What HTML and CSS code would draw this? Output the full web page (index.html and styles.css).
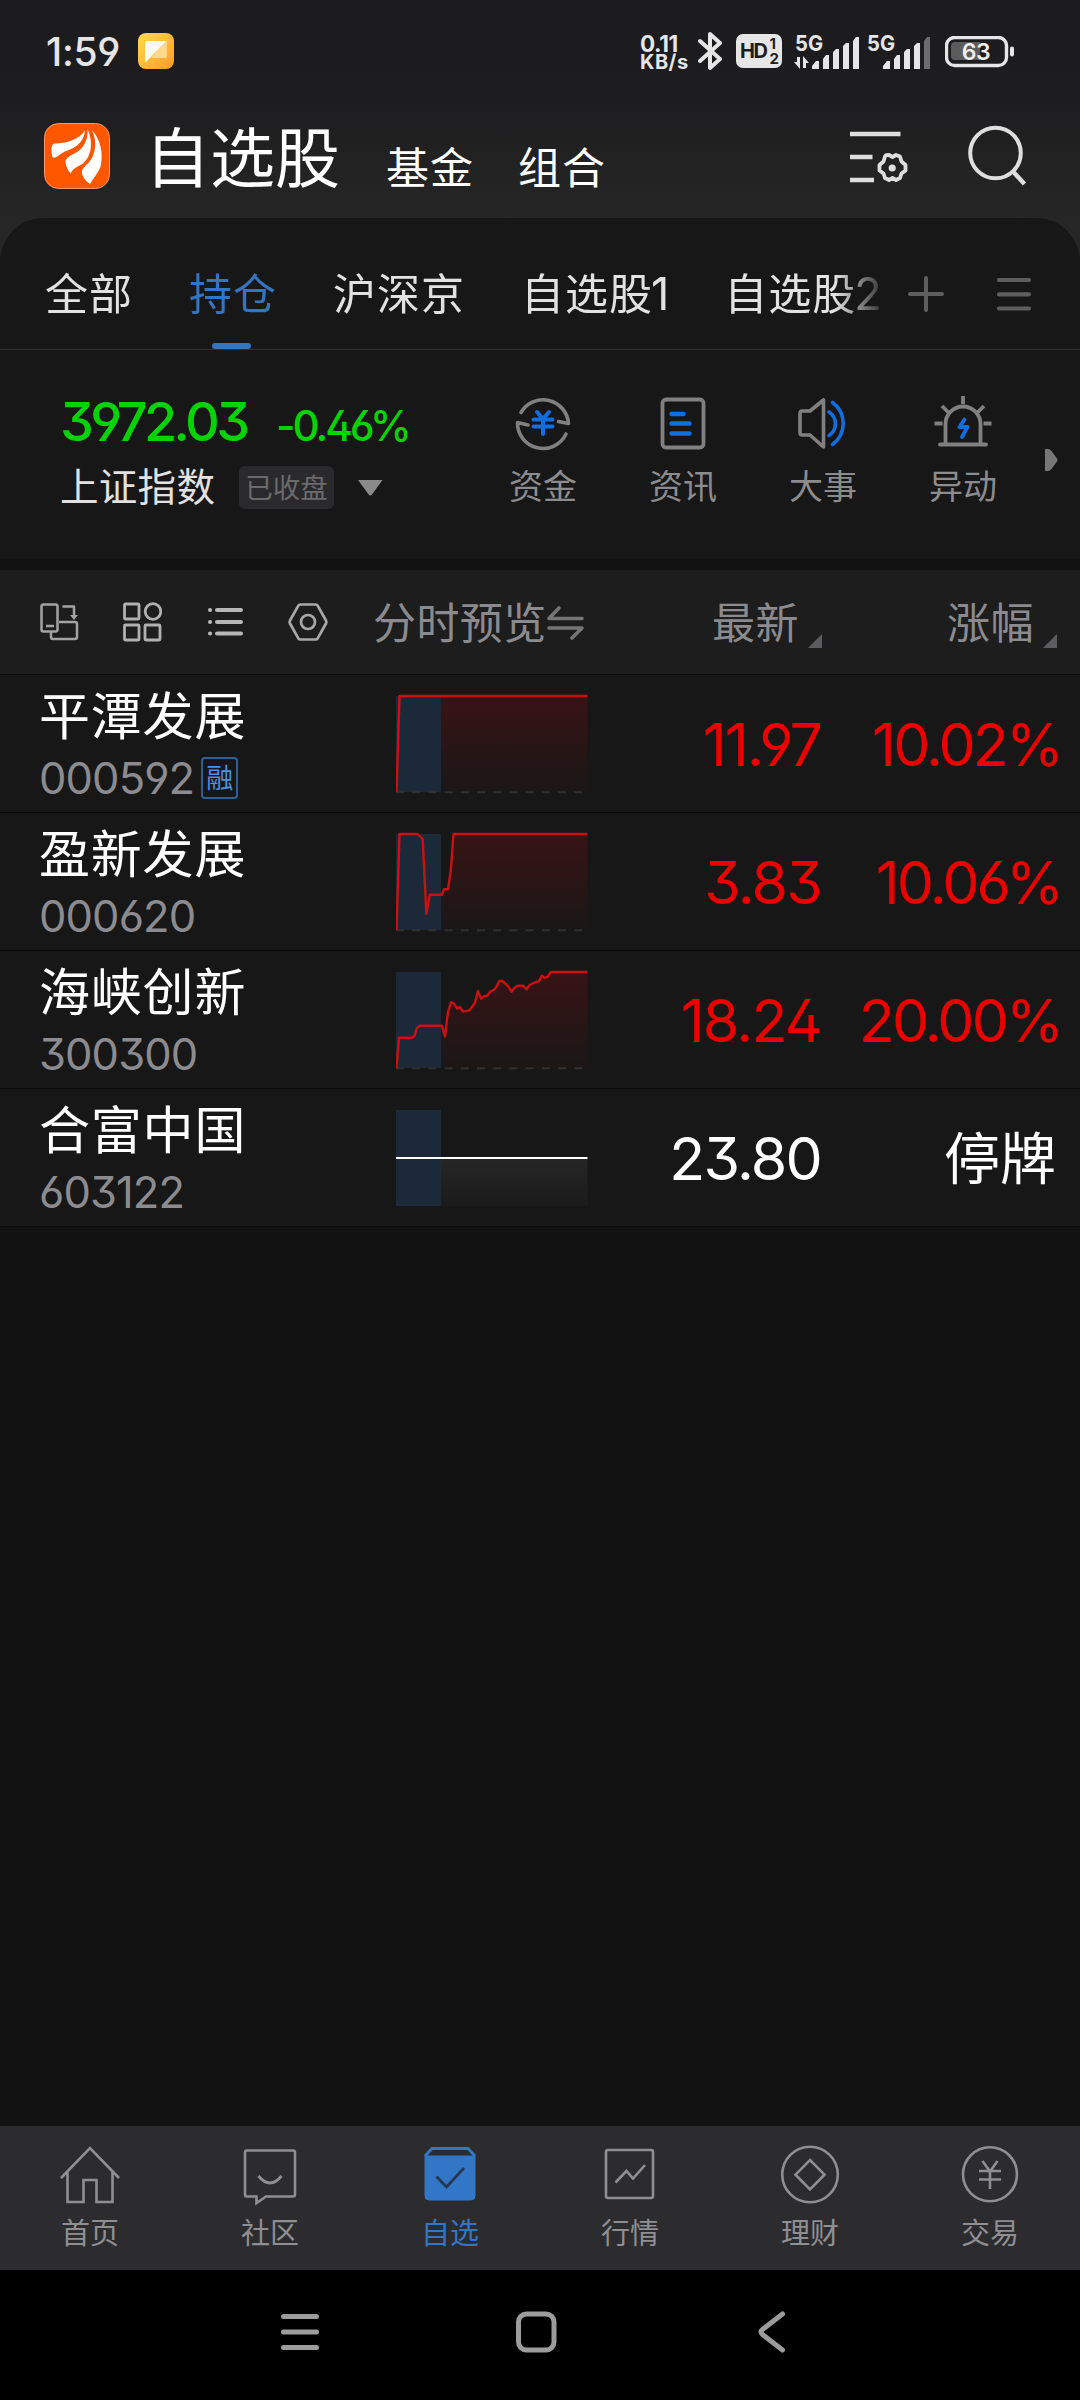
FILE: index.html
```html
<!DOCTYPE html>
<html lang="zh-CN">
<head>
<meta charset="utf-8">
<title>自选股</title>
<link rel="stylesheet" href="styles.css">
</head>
<body>
<div class="screen">
  <header class="top">
    <div class="status">
      <span class="clock">1:59</span>
      <svg class="note" width="36" height="36" viewBox="0 0 36 36">
        <defs><linearGradient id="noteBg" x1="0" y1="0" x2="1" y2="1"><stop offset="0" stop-color="#ffdd4a"/><stop offset="1" stop-color="#fd9a28"/></linearGradient></defs>
        <rect width="36" height="36" rx="8" fill="url(#noteBg)"/>
        <path d="M27 8h2v15a2 2 0 0 1-2 2H13z" fill="#ffd88a"/>
        <path d="M9 8h19L8 29c-1 0-1-1-1-2V10c0-1 1-2 2-2z" fill="#fffaf0"/>
      </svg>
      <span class="speed"><b>0.11</b><b class="unit">KB/s</b></span>
      <svg class="bt" width="26" height="40" viewBox="0 0 26 40"><path d="M2 10l20 18-10 9V3l10 9L2 30" fill="none" stroke="#e6e6e6" stroke-width="4" stroke-linejoin="round" stroke-linecap="round"/></svg>
      <span class="hd"><span>HD</span><span class="sims"><i>1</i><i>2</i></span></span>
      <svg class="signal" width="67" height="36" viewBox="0 0 67 36">
        <text x="1" y="17" class="net" textLength="28" lengthAdjust="spacingAndGlyphs">5G</text>
        <g fill="#e6e6e6"><path d="M3 23h3v12l-6-7h3zM9 34V22l6 7h-3v5z"/>
        <path d="M18 35v-3l4-5h3v8zM29 35V25l3-4h3v14zM39 35V18l3-3h3v20zM49 35V12l3-3h3v26zM59 35V7l3-4h3v32z"/></g>
      </svg>
      <svg class="signal signal-2" width="67" height="36" viewBox="0 0 67 36">
        <text x="1" y="17" class="net" textLength="28" lengthAdjust="spacingAndGlyphs">5G</text>
        <path fill="#e6e6e6" d="M17 35v-3l4-5h3v8zM28 35V25l3-4h3v14zM38 35V18l3-3h3v20zM48 35V12l3-3h3v26z"/>
        <path fill="#6d6d6e" d="M58 35V7l3-4h3v32z"/>
      </svg>
      <svg class="battery" width="70" height="32" viewBox="0 0 70 32">
        <rect x="1.5" y="1.5" width="60" height="28" rx="8" fill="none" stroke="#e6e6e6" stroke-width="3.4"/>
        <path d="M10 6h25v18H10a4 4 0 0 1-4-4V10a4 4 0 0 1 4-4z" fill="#5c5c5d"/>
        <rect x="65" y="10.500" width="4" height="10" rx="2" fill="#e6e6e6"/>
        <text x="31" y="24" class="level" text-anchor="middle">63</text>
      </svg>
    </div>
    <div class="titlebar">
      <svg class="logo" width="66" height="66" viewBox="0 0 66 66">
        <rect x=".5" y=".5" width="65" height="65" rx="14" fill="#ff5600" stroke="#ff9a66"/>
        <path fill="#fff" d="M41 7C36 16 24 20 11 20.500c-2.500 0-3.500 3-3.500 6 0 4 .5 8.500 2.500 8.500 3-1 6-4 12-7 9-3 18-8 19-21z"/>
        <path fill="#fff" d="M43.500 6c1 12-4.500 20-13 24.500-4 2-8 4-9 7.500 0 4 2 9 5 12.500 2-4 5-6 9-8 11-5 15-21 8-36.500z"/>
        <path fill="#fff" d="M48 7c9 10 11.500 24 8.500 37-2.500 6-7 11-10.500 17-4-3-9-8-8-13 1-4 5-6 8-10 6-8 7-20 2-31z"/>
      </svg>
      <h1>自选股</h1>
      <span class="section">基金</span>
      <span class="section">组合</span>
      <svg class="manage" width="60" height="56" viewBox="0 0 60 56" fill="none" stroke="#dedede">
        <path d="M1 6h50.500M1 29h22.500M1 52h24" stroke-width="4.600"/>
        <path d="M37 27.200l3-.2 3.500 2 3.500-2 4 1.500 1.500 5 4 3.500v5.500l-4 3-1.500 4.500-4 2-3.500-2-3.500 2-4-2-1.500-4.500-4-3V37l4-3.500 1.500-5z" stroke-width="3.800" stroke-linejoin="round"/>
        <circle cx="43.200" cy="40" r="3.600" fill="#dedede" stroke="none"/>
      </svg>
      <svg class="search" width="60" height="64" viewBox="0 0 60 64" fill="none" stroke="#dedede"><circle cx="27.500" cy="29" r="25.300" stroke-width="4"/><path d="M44.500 47l12 13" stroke-width="4.500"/></svg>
    </div>
  </header>

  <section class="panel">
    <nav class="tabs">
      <div class="tab-strip">
        <span>全部</span><span class="on">持仓</span><span>沪深京</span><span>自选股<em>1</em></span><span>自选股<em>2</em></span>
      </div>
      <svg class="plus" width="38" height="38" viewBox="0 0 38 38"><path d="M19 3v32M3 19h32" stroke="#5e5e5e" stroke-width="4" stroke-linecap="round"/></svg>
      <svg class="more" width="38" height="38" viewBox="0 0 38 38"><path d="M4 5h30M4 19.300h30M4 33.500h30" stroke="#5e5e5e" stroke-width="4.200" stroke-linecap="round"/></svg>
    </nav>
    <div class="market">
      <div class="index">
        <div class="quote"><span class="value">3972.03</span><span class="change">-0.46%</span></div>
        <div class="index-name"><span>上证指数</span><span class="closed">已收盘</span>
          <svg width="26" height="18" viewBox="0 0 26 18"><path d="M1 1h24.500L15 15.500q-1.700 2-3.400 0z" fill="#8a8a8a"/></svg>
        </div>
      </div>
      <div class="entries">
        <div class="entry">
          <svg width="60" height="60" viewBox="0 0 60 60" fill="none" stroke="#808080" stroke-width="3.600" stroke-linecap="round" stroke-linejoin="round"><path d="M8 19.500A25.500 25.500 0 0 1 55.500 30.500L45.500 28.500M53 41A25.500 25.500 0 0 1 4.500 29.500L15 32"/><path d="M24 19l6 7 6-7M20.500 26.500h19M20.500 33.500h19M30 27v14" stroke="#106fe0" stroke-width="4"/></svg>
          <span>资金</span>
        </div>
        <div class="entry">
          <svg width="60" height="60" viewBox="0 0 60 60" fill="none" stroke="#808080" stroke-width="3.800" stroke-linecap="round"><rect x="9.500" y="6.500" width="41" height="48" rx="3.500"/><path d="M18.500 21h12M18.500 30.500h18M18.500 40.500h18" stroke="#106fe0" stroke-width="4.400"/></svg>
          <span>资讯</span>
        </div>
        <div class="entry">
          <svg width="60" height="60" viewBox="0 0 60 60" fill="none" stroke="#808080" stroke-width="3.600" stroke-linecap="round" stroke-linejoin="round"><path d="M30.500 7v47L17 42H9.500q-2.500 0-2.500-2.500V20.500q0-2.500 2.500-2.500H17z"/><path d="M36 19a14 14 0 0 1 0 23.500M39.500 9.500a26 26 0 0 1 0 42" stroke="#106fe0"/></svg>
          <span>大事</span>
        </div>
        <div class="entry">
          <svg width="60" height="60" viewBox="0 0 60 60" fill="none" stroke="#808080" stroke-width="3.800" stroke-linejoin="round"><path d="M12.500 51V31a17.500 17.500 0 0 1 35 0v20M7 51.500h46" stroke-linecap="round"/><path d="M30 3v8M9 13l6.500 6.500M51 13l-6.500 6.500M1.500 30.500h8M50.500 30.500h8"/><path d="M31.500 26.500l-5 7.500h8l-5.500 10" stroke="#106fe0" stroke-width="3.800" stroke-linecap="round"/></svg>
          <span>异动</span>
        </div>
      </div>
      <svg class="next" width="14" height="24" viewBox="0 0 14 24"><path d="M1 1h3q2 0 3.500 2l5.500 7.500q1 1.500 0 3L7.500 21Q6 23 4 23H1z" fill="#767676"/></svg>
    </div>
  </section>

  <section class="list">
    <div class="head">
      <div class="tools">
        <svg width="40" height="40" viewBox="0 0 40 40" fill="none" stroke="#a3a3a3" stroke-width="2.500" stroke-linejoin="round"><rect x="2.500" y="2.500" width="16" height="27" rx="2"/><path d="M7 24h8M12 30v5q0 2 2 2h22q2 0 2-2V22q0-2-2-2H20M23.500 4.500H35V14"/><path d="M31 13l4 5 4-5z" fill="#a3a3a3" stroke="none"/></svg>
        <svg width="40" height="40" viewBox="0 0 40 40" fill="none" stroke="#b0b0b0" stroke-width="2.800"><rect x="2.500" y="2" width="14.500" height="15" rx="1"/><circle cx="31" cy="9.500" r="7.800"/><rect x="2.500" y="23" width="14.500" height="15" rx="1"/><rect x="23" y="23" width="15" height="15" rx="1"/></svg>
        <svg width="40" height="40" viewBox="0 0 40 40" stroke="#b8b8b8" stroke-width="4" stroke-linecap="round"><path d="M12 8h24M12 20h24M12 31.500h24M5 8h.1M5 20h.1M5 31.500h.1"/></svg>
        <svg width="40" height="40" viewBox="0 0 40 40" fill="none" stroke="#a8a8a8" stroke-width="2.700" stroke-linejoin="round"><path d="M12.500 2.500h15q1.500 0 2.300 1.300L38 18.500q.7 1.500 0 3l-8.200 14.700q-.8 1.300-2.300 1.300h-15q-1.500 0-2.300-1.300L2 21.500q-.7-1.500 0-3l8.200-14.700q.8-1.300 2.300-1.300z"/><circle cx="20" cy="20" r="7"/></svg>
      </div>
      <div class="preview">分时预览<svg width="38" height="36" viewBox="0 0 38 36" fill="none" stroke="#757575" stroke-width="3.600" stroke-linecap="round" stroke-linejoin="round"><path d="M12 3L2 13.500h33M2 23h33L25 33"/></svg></div>
      <div class="col price">最新<svg width="14" height="14" viewBox="0 0 14 14"><path d="M14 0v14H0z" fill="#5c5c5e"/></svg></div>
      <div class="col pct">涨幅<svg width="14" height="14" viewBox="0 0 14 14"><path d="M14 0v14H0z" fill="#5c5c5e"/></svg></div>
    </div>

    <div class="row">
      <div class="stock"><div class="name">平潭发展</div><div class="code">000592<span class="margin-tag">融</span></div></div>
      <svg class="chart" width="192" height="100" viewBox="0 -2 192 100">
        <defs>
          <linearGradient id="rise" gradientUnits="userSpaceOnUse" x1="0" y1="0" x2="0" y2="96"><stop offset="0" stop-color="#381314"/><stop offset="1" stop-color="#1a1717"/></linearGradient>
          <linearGradient id="flat" gradientUnits="userSpaceOnUse" x1="0" y1="48" x2="0" y2="96"><stop offset="0" stop-color="#262626"/><stop offset="1" stop-color="#1b1b1b"/></linearGradient>
        </defs>
        <path d="M0 96L3 0h188.500v96z" fill="url(#rise)"/><path class="band" d="M0 0h45v96H0z"/><path class="base" d="M0 96.300h187"/>
        <path class="line" d="M.5 96L3.500 0H191.500"/>
      </svg>
      <div class="price up">11.97</div><div class="pct up">10.02%</div>
    </div>
    <div class="row">
      <div class="stock"><div class="name">盈新发展</div><div class="code">000620</div></div>
      <svg class="chart" width="192" height="100" viewBox="0 -2 192 100">
        <path d="M45 60.700L48 55.300h4l2.800-19L57.500 0h134v96H45z" fill="url(#rise)"/><path class="band" d="M0 0h45v96H0z"/><path class="base" d="M0 96.300h187"/>
        <path class="line" d="M.5 96L3.500 0H21.600L26.700 5l3.600 74.700 3.500-19h12L48 55.300h4l2.800-19L57.500 0h134"/>
      </svg>
      <div class="price up">3.83</div><div class="pct up">10.06%</div>
    </div>
    <div class="row">
      <div class="stock"><div class="name">海峡创新</div><div class="code">300300</div></div>
      <svg class="chart" width="192" height="100" viewBox="0 -2 192 100">
        <path fill="url(#rise)" d="M45 96V53.700L49 64.300 51.800 41 55 30.300 57.700 31.300 61.300 36.700 63.700 35 67.200 39.700 73.500 38.300 79 30.700 81.900 19 85 26.700 91.300 23.700 94.100 19.700 100.400 15 103.200 9H106.400L112.300 14.300 115.500 19.700 121.400 13.700H127.300L130.500 17.300 133.700 13 142.700 9.300 145.900 3.700 148.700 6 151.800 4.700 154.600 0H191.500V96z"/><path class="band" d="M0 0h45v96H0z"/><path class="base" d="M0 96.300h187"/>
        <path class="line" d="M.5 96.300L3 65.700H15.800L18.600 63.700 21 55.700 24 53.700H45.900L49 64.300 51.800 41 55 30.300 57.700 31.300 61.300 36.700 63.700 35 67.200 39.700 73.500 38.300 79 30.700 81.900 19 85 26.700 87.800 24.300 91.300 23.700 94.100 19.700 97.700 18 100.400 15 103.200 9H106.400L112.300 14.300 115.500 19.700 118.600 15.700 121.400 13.700H127.300L130.500 17.300 133.700 13 139.600 10 142.700 9.300 145.900 3.700 148.700 6 151.800 4.700 154.600 0H191.500"/>
      </svg>
      <div class="price up">18.24</div><div class="pct up">20.00%</div>
    </div>
    <div class="row">
      <div class="stock"><div class="name">合富中国</div><div class="code">603122</div></div>
      <svg class="chart" width="192" height="100" viewBox="0 -2 192 100">
        <path d="M45 48h146.500v48H45z" fill="url(#flat)"/><path class="band" d="M0 0h45v96H0z"/><path d="M0 48h191.500" stroke="#fff" stroke-width="2"/>
      </svg>
      <div class="price">23.80</div><div class="pct halted">停牌</div>
    </div>
  </section>

  <nav class="bottom">
    <div class="item"><svg width="64" height="64" viewBox="0 0 64 64"><path d="M3 35L32 5l29 30M9.500 29v30h16V37h13v22h16V29"/></svg><span>首页</span></div>
    <div class="item"><svg width="64" height="64" viewBox="0 0 64 64"><path d="M9 7.500h46q2 0 2 2v42q0 2-2 2H28L18.500 60v-6.500H9q-2 0-2-2v-42q0-2 2-2z"/><path d="M20.500 33q11.500 14 23 0" stroke-width="2.800"/></svg><span>社区</span></div>
    <div class="item on"><svg width="64" height="64" viewBox="0 0 64 64"><path d="M7 13l7-7.500h36l7 7.500" stroke="#3277c7" stroke-width="3"/><path d="M7 13h50v40q0 4-4 4H11q-4 0-4-4z" fill="#3277c7" stroke="#3277c7" stroke-width="1"/><path d="M18.500 33.500l10 10.500L46 25" stroke="#263750" stroke-width="2.800"/></svg><span>自选</span></div>
    <div class="item"><svg width="64" height="64" viewBox="0 0 64 64"><rect x="8" y="7" width="47" height="48" rx="2"/><path d="M17.500 39.500l11-11.500 6.500 7.500L47 22"/></svg><span>行情</span></div>
    <div class="item"><svg width="64" height="64" viewBox="0 0 64 64"><circle cx="32" cy="31.500" r="27.800"/><path d="M32 17l14.500 14.700L32 46.500 17.500 31.700z"/></svg><span>理财</span></div>
    <div class="item"><svg width="64" height="64" viewBox="0 0 64 64"><circle cx="32" cy="31.300" r="27"/><path d="M24.500 18L32 28.500 39.500 18M21 28h22M21 36.500h22M32 28v18"/></svg><span>交易</span></div>
  </nav>
  <nav class="system">
    <svg width="50" height="50" viewBox="0 0 50 50"><path d="M8.500 9.500h33M8.500 25h33M8.500 40.500h33"/></svg>
    <svg width="50" height="50" viewBox="0 0 50 50"><rect x="7.500" y="7" width="35.500" height="36" rx="8"/></svg>
    <svg width="50" height="50" viewBox="0 0 50 50"><path d="M35.500 7L15.500 22.500q-3 2.500 0 5L35.500 43"/></svg>
  </nav>
</div>
</body>
</html>
```

FILE: styles.css
```css
* { box-sizing: border-box; }
body {
  margin: 0;
  background: #121212;
  color: #e2e2e2;
  font-family: "Noto Sans CJK SC", sans-serif;
}
svg { display: block; flex: none; }
.screen {
  width: 1080px;
  height: 2400px;
  display: flex;
  flex-direction: column;
  overflow: hidden;
}

/* status bar and title */
.top {
  height: 262px;
  margin-bottom: -44px;
  background: linear-gradient(#1c1c1e 0, #1d1d1f 100px, #262626 218px);
}
.status {
  height: 104px;
  display: flex;
  align-items: flex-start;
  padding: 32px 0 0 46px;
  font-family: Inter, sans-serif;
  color: #e6e6e6;
}
.clock {
  width: 92px;
  font-size: 39px;
  font-weight: 500;
  line-height: 39px;
  letter-spacing: -.3px;
  font-feature-settings: "ss01";
}
.note { margin-top: 1px; }
.speed {
  width: 50px;
  margin-left: 466px;
  display: flex;
  flex-direction: column;
}
.speed b { font-size: 22.500px; line-height: 23px; letter-spacing: -.4px; font-weight: 700; }
.speed .unit { font-size: 20px; line-height: 15px; letter-spacing: .5px; }
.bt { margin: -1px 0 0 8px; }
.hd {
  width: 46px;
  height: 34px;
  margin: 2px 0 0 12px;
  padding-left: 4px;
  display: flex;
  align-items: center;
  background: #e6e6e6;
  border-radius: 7px;
  color: #1d1d1f;
  font-size: 20px;
  font-weight: 700;
  letter-spacing: -1.500px;
}
.sims { display: flex; flex-direction: column; margin-left: 3px; }
.sims i { font-style: normal; font-size: 15px; line-height: 15px; letter-spacing: 0; }
.signal { margin: 2px 0 0 12px; overflow: visible; }
.signal-2 { margin-left: 5px; }
.net { font: 700 22px Inter, sans-serif; fill: #e6e6e6; }
.battery { margin: 4px 0 0 12px; }
.level { font: 600 23px Inter, sans-serif; fill: #f0f0f0; letter-spacing: -.5px; }

.titlebar { height: 114px; display: flex; align-items: flex-start; padding-left: 44px; }
.logo { margin-top: 19px; }
h1 {
  width: 241px;
  margin: 18px 0 0 35px;
  font-size: 65px;
  line-height: 65px;
  font-weight: 400;
  color: #fff;
}
.section {
  width: 88px;
  margin: 40px 44px 0 0;
  font-size: 43px;
  line-height: 43px;
  letter-spacing: 1px;
  color: #fff;
}
.manage { margin: 24px 0 0 199px; }
.search { margin: 20px 0 0 59px; }

/* tabs and index panel */
.panel {
  height: 341px;
  flex: none;
  background: #171717;
  border-radius: 44px 44px 0 0;
}
.tabs {
  height: 132px;
  display: flex;
  align-items: flex-start;
  border-bottom: 1px solid #2e2e2e;
}
.tab-strip {
  width: 882px;
  height: 131px;
  padding: 52px 0 0 45px;
  display: flex;
  gap: 56px;
  overflow: hidden;
  white-space: nowrap;
  font-size: 43px;
  line-height: 43px;
  letter-spacing: 1px;
  -webkit-mask-image: linear-gradient(90deg, #000 835px, transparent 890px);
  mask-image: linear-gradient(90deg, #000 835px, transparent 890px);
}
.tab-strip span { height: 79px; flex: none; }
.tab-strip em {
  font-style: normal;
  font-size: 45px;
  letter-spacing: -1px;
  margin-left: -2px;
  font-family: Inter, sans-serif;
}
.tab-strip .on { color: #3574c0; }
.tab-strip .on::after {
  content: "";
  display: block;
  width: 39px;
  height: 6px;
  margin: 30px 0 0 23px;
  border-radius: 3px;
  background: #3574c0;
}
.plus { margin: 57px 0 0 25px; }
.more { margin: 57px 0 0 50px; }

.market { display: flex; }
.index { width: 473px; padding: 44px 0 0 60px; }
.quote {
  height: 56px;
  display: flex;
  align-items: baseline;
  color: #06d306;
  font-family: Inter, sans-serif;
  font-weight: 500;
  font-feature-settings: "ss01", "cv09";
}
.value { width: 216px; font-size: 54px; line-height: 56px; letter-spacing: -3.600px; }
.change { font-size: 42px; letter-spacing: -3px; }
.index-name {
  display: flex;
  align-items: center;
  height: 43px;
  margin-top: 16px;
  font-size: 38.500px;
  line-height: 39px;
  letter-spacing: .3px;
}
.index-name > span:first-child { width: 179px; margin-top: -7px; }
.closed {
  width: 95px;
  height: 43px;
  margin-right: 23px;
  border-radius: 6px;
  background: #2a2a2c;
  color: #6b6b6b;
  font-size: 27.500px;
  line-height: 40px;
  letter-spacing: 0;
  text-align: center;
}
.entries { display: flex; }
.entry {
  width: 140px;
  padding-top: 43px;
  display: flex;
  flex-direction: column;
  align-items: center;
}
.entry span {
  margin-top: 13px;
  font-size: 34px;
  line-height: 38px;
  color: #8c8c8e;
}
.next { margin: 98px 0 0 11px; }

/* watch list */
.list { margin-top: 11px; flex: 1; }
.head, .row { display: grid; grid-template-columns: 396px 192px 1fr 236px; }
.head {
  height: 105px;
  background: #1d1d1d;
  border-bottom: 1px solid #0c0c0c;
  color: #8b8b8f;
  font-size: 43px;
  line-height: 43px;
  grid-template-columns: 373px 215px 1fr 236px;
}
.tools { display: flex; gap: 43px; padding: 32px 0 0 39px; }
.preview { display: flex; padding-top: 29px; white-space: nowrap; letter-spacing: .4px; }
.preview svg { margin: 6px 0 0 0; }
.col { display: flex; justify-content: flex-end; padding-top: 29px; letter-spacing: .5px; }
.col svg { margin: 35px 0 0 9px; }
.head .price { padding-right: 22px; }
.head .pct { padding-right: 23px; }
.row {
  height: 138px;
  background: #171717;
  border-bottom: 1px solid #0c0c0c;
  color: #fff;
}
.stock { padding: 13px 0 0 39px; }
.name { font-size: 51px; line-height: 51px; letter-spacing: .8px; }
.code {
  height: 50px;
  margin-top: 14px;
  display: flex;
  align-items: center;
  font: 400 43.500px/50px Inter, sans-serif;
  font-feature-settings: "ss01", "cv09";
  letter-spacing: -.9px;
  color: #8b8b90;
}
.margin-tag {
  width: 37px;
  height: 42px;
  margin-left: 7px;
  border: 2px solid #2f5f96;
  border-radius: 4px;
  font: 27px/36px "Noto Sans CJK SC", sans-serif;
  letter-spacing: 0;
  text-align: center;
  color: #4a90e0;
}
.chart { margin-top: 19px; }
.band { fill: #1c2938; }
.base { stroke: #303030; stroke-width: 2; stroke-dasharray: 8 8.200; }
.line { fill: none; stroke: #cc1010; stroke-width: 2.400; stroke-linejoin: round; }
.row .price, .row .pct {
  font: 400 59px/139px Inter, sans-serif;
  font-feature-settings: "ss01", "cv09";
  letter-spacing: -1.800px;
  text-align: right;
}
.row .price { padding-right: 23px; }
.row .pct { padding-right: 19px; letter-spacing: -2.900px; }
.row .up { color: #ea0000; }
.row .pct.halted {
  font: 400 56px/131px "Noto Sans CJK SC", sans-serif;
  letter-spacing: 0;
  padding-right: 24px;
}

/* bottom navigation */
.bottom { height: 144px; flex: none; display: flex; background: #2c2c2e; }
.item {
  width: 180px;
  padding-top: 17px;
  display: flex;
  flex-direction: column;
  align-items: center;
  font-size: 29px;
  line-height: 34px;
  color: #8f8f92;
}
.item svg { fill: none; stroke: #8f8f92; stroke-width: 2.600; }
.item span { margin-top: 7px; }
.item.on { color: #3277c7; }
.system {
  height: 130px;
  flex: none;
  display: flex;
  justify-content: center;
  gap: 186px;
  padding: 37px 9px 0 0;
  background: #000;
}
.system svg { fill: none; stroke: #9c9c9c; stroke-width: 5; stroke-linecap: round; }
```
